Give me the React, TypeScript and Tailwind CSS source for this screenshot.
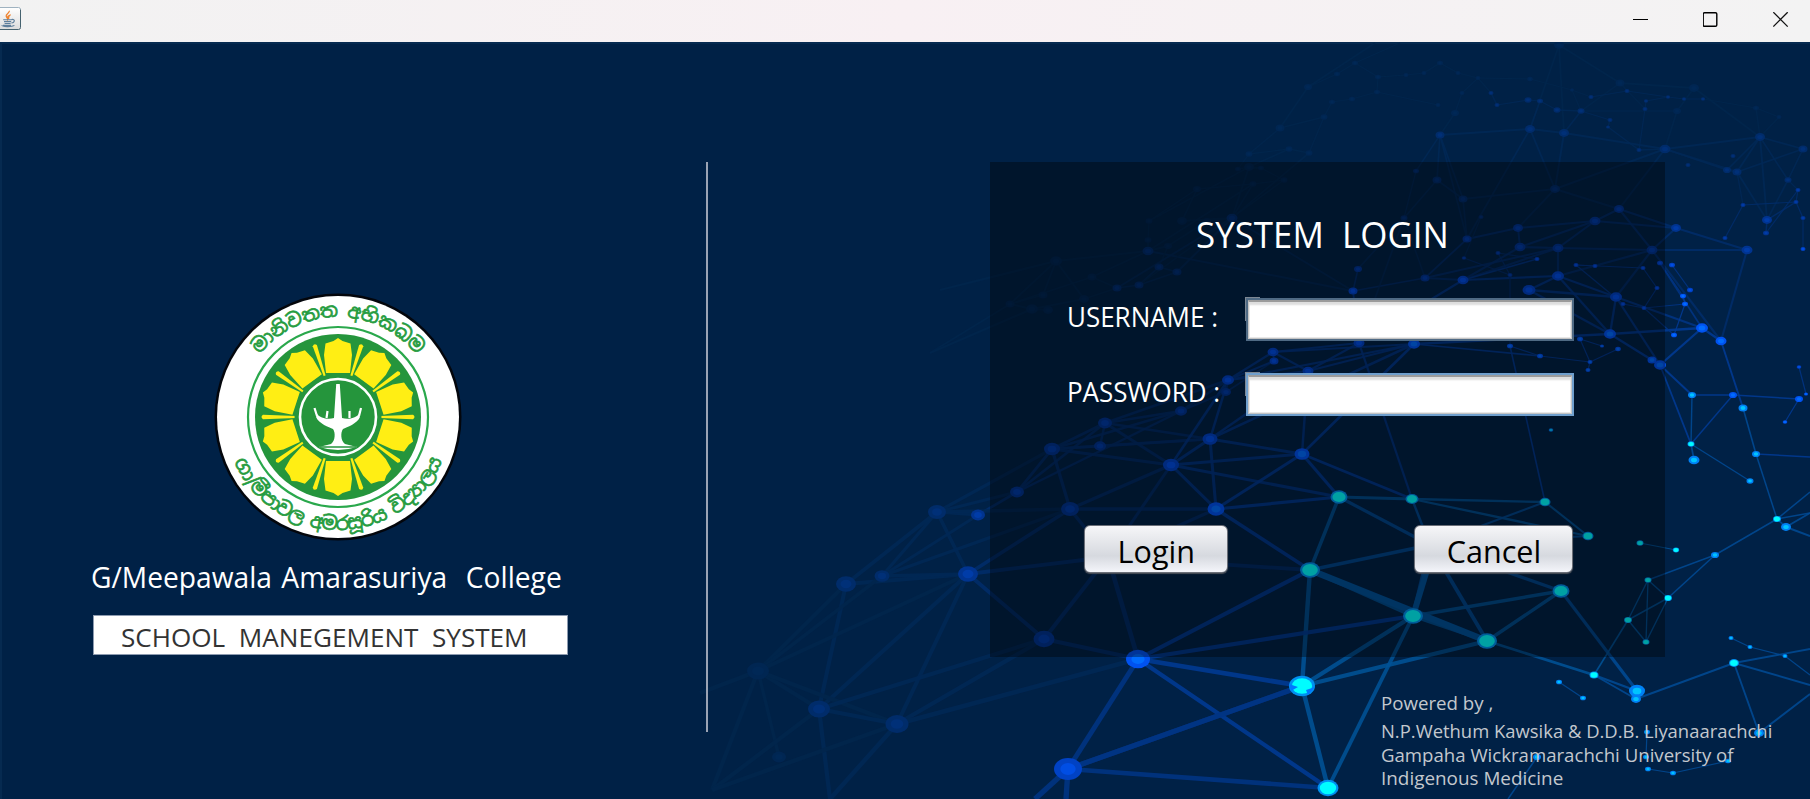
import React from "react";

type Node = [string, number, number, number, number];

/* id, x, y, radius, brightness (0 faint - 6 cyan) */
const nodes: Node[] = [
  ["a0", 1052, 449, 8, 2], ["a1", 1017, 492, 7, 2], ["a2", 937, 512, 9, 1], ["a3", 978, 515, 7, 2],
  ["a4", 1070, 509, 9, 2], ["a5", 846, 584, 10, 1], ["a6", 882, 576, 7.5, 1], ["a7", 968, 574, 10, 2],
  ["a8", 758, 671, 11, 0], ["a9", 819, 709, 11, 1], ["a10", 897, 724, 11.5, 1], ["a11", 779, 757, 7, 0],
  ["a12", 1044, 639, 10.5, 2],
  ["c0", 1210, 439, 7.5, 3], ["c1", 1171, 465, 8, 3], ["c2", 1302, 454, 7.5, 4], ["c3", 1339, 497, 8.5, 6],
  ["c4", 1216, 509, 8.5, 4], ["c5", 1310, 570, 10, 6], ["c6", 1138, 659, 12, 4], ["c7", 1302, 686, 13, 6],
  ["c8", 1068, 769, 14, 3], ["c9", 1328, 788, 10.5, 6], ["c10", 1105, 423, 7, 2], ["c11", 1100, 446, 6, 2],
  ["e0", 1412, 499, 6.5, 6], ["e1", 1545, 502, 5.5, 6], ["e2", 1588, 536, 5.5, 6], ["e3", 1561, 591, 8.5, 6],
  ["e4", 1413, 616, 10, 6], ["e5", 1487, 641, 10, 6], ["e6", 1691, 444, 3.5, 6], ["e7", 1694, 460, 5.5, 5],
  ["e8", 1750, 481, 3.5, 5], ["e9", 1756, 454, 4, 5], ["e10", 1777, 519, 4, 6], ["e11", 1786, 527, 5, 5],
  ["e12", 1715, 555, 4, 5], ["e13", 1640, 543, 3.5, 6], ["e14", 1676, 550, 3.2, 6], ["e15", 1648, 580, 3.5, 6],
  ["e16", 1668, 598, 4, 6], ["e17", 1628, 620, 4, 6], ["e18", 1646, 642, 3.5, 6], ["e19", 1594, 675, 4.5, 6],
  ["e20", 1637, 691, 8, 5], ["e21", 1636, 699, 5, 5], ["e22", 1559, 682, 3, 5], ["e23", 1583, 698, 3, 5],
  ["e24", 1731, 638, 2.5, 5], ["e25", 1750, 647, 2.5, 5], ["e26", 1785, 656, 2.5, 5], ["e27", 1734, 663, 5, 6],
  ["e28", 1759, 733, 5, 5], ["e29", 1647, 732, 3, 5], ["e30", 1646, 757, 3, 5], ["e31", 1648, 769, 3, 5],
  ["e32", 1673, 773, 3, 5], ["e33", 1728, 761, 3, 5], ["e34", 1537, 757, 4, 5],
  ["g0", 1437, 180, 4.5, 1], ["g1", 1463, 199, 4.5, 1], ["g2", 1555, 189, 5, 1], ["g3", 1619, 209, 5, 2],
  ["g4", 1595, 221, 5.5, 2], ["g5", 1518, 228, 5, 2], ["g6", 1520, 247, 5.5, 2], ["g7", 1558, 248, 5.5, 2],
  ["g8", 1467, 239, 4.5, 2], ["g9", 1425, 278, 4.5, 2], ["g10", 1463, 280, 5.5, 3], ["g11", 1558, 276, 6, 3],
  ["g12", 1529, 290, 6.5, 3], ["g13", 1616, 297, 6, 3], ["g14", 1610, 334, 6, 4], ["g15", 1652, 360, 4.5, 4],
  ["g16", 1660, 365, 6, 4], ["g17", 1652, 250, 5.5, 2], ["g18", 1676, 228, 5, 2], ["g19", 1747, 250, 5.5, 2],
  ["g20", 1702, 328, 6, 4], ["g21", 1721, 341, 5.5, 4], ["g22", 1692, 395, 4, 5], ["g23", 1733, 395, 4, 4],
  ["g24", 1743, 408, 4.5, 5], ["g26", 1799, 399, 4, 4], ["g27", 1806, 394, 2, 4], ["g28", 1799, 367, 2.3, 3],
  ["g29", 1785, 422, 2.3, 4], ["g30", 1660, 263, 3, 3], ["g31", 1672, 265, 3, 3], ["g32", 1690, 290, 3, 3],
  ["g33", 1683, 296, 3, 4], ["g34", 1685, 304, 3, 4], ["g35", 1674, 335, 3, 4], ["g36", 1657, 288, 2.5, 3],
  ["g37", 1644, 308, 2.5, 3], ["g38", 1643, 268, 2.5, 3], ["g39", 1623, 304, 2.5, 3], ["g40", 1595, 266, 2.5, 3],
  ["g41", 1576, 265, 2.5, 3], ["g42", 1537, 259, 2.5, 3], ["g43", 1510, 275, 2.5, 2], ["g44", 1498, 253, 2.5, 2],
  ["g45", 1464, 258, 2.3, 2], ["g46", 1481, 217, 2.5, 1], ["g47", 1414, 344, 6, 4], ["g48", 1510, 346, 3, 4],
  ["g49", 1540, 356, 3, 4], ["g50", 1590, 362, 2.5, 4], ["g51", 1588, 370, 2.5, 4], ["g52", 1580, 339, 3, 4],
  ["g53", 1602, 346, 2, 4], ["g54", 1618, 349, 2.8, 4], ["g55", 1551, 430, 2.3, 5], ["g56", 1404, 218, 3.5, 1],
  ["g57", 1416, 171, 3, 1],
  ["h0", 1737, 172, 4.5, 1], ["h1", 1727, 170, 4, 1], ["h2", 1767, 220, 5, 2], ["h3", 1766, 233, 3, 2],
  ["h4", 1743, 205, 2.5, 2], ["h5", 1725, 238, 2.5, 2], ["h6", 1788, 180, 3.5, 1], ["h7", 1798, 190, 2.5, 2],
  ["h8", 1796, 202, 2.5, 2], ["h9", 1803, 218, 2.5, 2], ["h10", 1803, 249, 2.5, 3],
  ["t0", 1440, 135, 4.5, 1], ["t1", 1530, 129, 5, 1], ["t2", 1564, 133, 5, 1], ["t3", 1665, 149, 5.5, 1],
  ["t4", 1760, 137, 5, 1], ["t5", 1803, 149, 4.5, 1], ["t6", 1620, 83, 4.5, 0], ["t7", 1694, 88, 5, 0],
  ["t8", 1677, 111, 4, 0], ["t9", 1559, 45, 5, 0], ["t10", 1308, 87, 4, 0], ["t11", 1280, 128, 4.5, 0],
  ["t12", 1324, 117, 3.5, 0], ["t13", 1249, 154, 3.5, 0], ["t14", 1289, 149, 3.5, 0], ["t15", 1309, 153, 3.5, 0],
  ["t16", 1249, 167, 5, 0], ["t17", 1238, 169, 3, 0], ["t18", 1261, 168, 3, 0], ["t19", 1253, 184, 3.5, 0],
  ["t20", 1284, 180, 3.5, 0], ["t21", 1232, 218, 5.5, 1], ["t22", 1377, 92, 3, 0], ["t23", 1332, 102, 3, 0],
  ["t24", 1352, 99, 3, 0], ["t25", 1438, 105, 2.5, 0], ["t26", 1455, 113, 4, 0], ["t27", 1462, 93, 2.5, 0],
  ["t28", 1491, 93, 2.5, 1], ["t29", 1497, 105, 2.5, 1], ["t30", 1528, 100, 3.5, 1], ["t31", 1540, 101, 3, 1],
  ["t32", 1557, 110, 3.5, 1], ["t33", 1581, 111, 3.5, 1], ["t34", 1610, 120, 2.5, 1], ["t35", 1608, 127, 2, 1],
  ["t36", 1639, 150, 2.5, 1], ["t37", 1645, 109, 2.5, 1], ["t38", 1646, 101, 2.2, 1], ["t39", 1668, 97, 2.2, 1],
  ["t40", 1684, 99, 2.2, 1], ["t41", 1703, 99, 2.2, 1], ["t42", 1627, 91, 2.5, 1], ["t43", 1591, 97, 2.5, 1],
  ["t44", 1572, 90, 2.2, 0], ["t45", 1530, 79, 2.8, 0], ["t46", 1478, 78, 2.5, 0], ["t47", 1440, 63, 3, 0],
  ["t48", 1458, 73, 2.5, 0], ["t49", 1424, 73, 2.5, 0], ["t50", 1406, 75, 2.5, 0], ["t51", 1378, 77, 3, 0],
  ["t52", 1355, 63, 3, 0], ["t53", 1337, 74, 3, 0], ["t54", 1756, 108, 3, 0], ["t55", 1779, 117, 2.5, 0],
  ["t56", 1733, 156, 2.5, 1], ["t57", 1688, 165, 2.5, 1],
  ["l0", 1056, 261, 6, 0], ["l1", 1092, 277, 4.5, 0], ["l2", 1117, 288, 4.5, 1], ["l3", 1139, 285, 4.5, 1],
  ["l4", 1084, 299, 5, 0], ["l5", 1043, 295, 4.5, 0], ["l6", 1048, 310, 5, 0], ["l7", 1032, 309, 6, 0],
  ["l8", 1010, 304, 4.5, 0], ["l9", 1148, 251, 5.5, 1], ["l10", 1148, 240, 3.5, 0], ["l11", 1149, 221, 3.5, 0],
  ["l12", 1182, 221, 5, 0], ["l13", 1168, 246, 4, 0], ["l14", 1159, 267, 4.5, 1], ["l15", 1177, 272, 4.5, 1],
  ["l17", 1207, 221, 4, 0], ["l18", 1197, 189, 4, 0], ["l20", 1358, 269, 4, 2], ["l21", 1353, 291, 4.5, 3],
  ["l22", 1359, 343, 5.5, 3], ["l23", 1273, 352, 5.5, 3], ["l24", 1274, 361, 4.5, 3], ["l25", 1308, 371, 5.5, 3],
  ["l26", 1228, 380, 6, 3], ["l27", 1226, 392, 5, 2], ["l28", 1181, 411, 6, 2],
  /* vertices that sit outside the visible area or behind a control */
  ["o0", 700, 693, 0, 0], ["o1", 712, 790, 0, 0], ["o2", 830, 799, 0, 1], ["o3", 1810, 492, 0, 5],
  ["o4", 1810, 513, 0, 5], ["o5", 1810, 536, 0, 5], ["o6", 1810, 649, 0, 5], ["o7", 1810, 675, 0, 5],
  ["o8", 1810, 685, 0, 5], ["o9", 1810, 694, 0, 5], ["o10", 1508, 799, 0, 5], ["o11", 1035, 799, 0, 3],
  ["o12", 1066, 799, 0, 3], ["o13", 1810, 457, 0, 4], ["o14", 1810, 400, 0, 4], ["o15", 1430, 545, 0, 5],
  ["o16", 1108, 557, 0, 2], ["o17", 1375, 43, 0, 0], ["o18", 1400, 43, 0, 0], ["o19", 930, 353, 0, 0],
  ["o20", 940, 290, 0, 0],
];

const links =
  "a0-a2 a0-a1 a0-a4 a0-c10 a0-c11 a0-c0 a0-c1 a0-l28 a1-a2 a1-a3 a1-c10 a1-l28 a2-a3 a2-a5 a2-a6 a2-a7 a2-a4 a3-a6 " +
  "a4-c1 a4-c4 a4-a7 a4-a6 a4-o16 a5-a8 a5-a7 a5-a9 a6-a8 a6-a7 a7-a12 a7-a8 a7-a9 a7-a10 a7-o16 a8-a9 a8-a11 a8-a10 a8-o0 a8-o1 " +
  "a9-a10 a9-a12 a9-o1 a9-o2 a10-a12 a10-c6 a10-o1 a10-o2 a12-c6 a12-o16 o16-c6 o16-c1 o16-c4 " +
  "c0-c1 c0-c2 c0-c4 c0-c10 c0-c11 c0-l26 c0-g47 c0-l25 c1-c2 c1-c3 c1-c4 c1-c10 c2-c3 c2-c4 c2-e0 c2-l25 c2-g47 c3-c4 c3-c5 c3-e0 c3-o15 " +
  "c4-c5 c5-o16 c5-o15 c5-e4 c5-c6 c5-c7 c6-c7 c6-c8 c6-c9 c6-e4 c7-c8 c7-c9 c7-e4 c7-e5 c8-c9 c8-c7 c8-o11 c8-o12 c9-e4 c10-l28 c10-l26 c10-c11 " +
  "e0-e1 e0-o15 e0-l22 e0-e2 e1-e2 e1-g48 e1-o15 e2-o15 e3-e4 e3-e5 e3-o15 e3-e20 e4-o15 e4-e5 e5-o15 e5-e19 e6-e7 e6-e8 " +
  "e6-g22 e6-g23 e6-g16 e9-g24 e9-e10 e9-o13 e10-e11 e10-e12 e10-o3 e10-o4 e11-o4 e11-o5 e12-e15 e12-e16 e13-e14 e15-e16 e15-e17 e15-e18 " +
  "e16-e17 e16-e18 e17-e18 e17-e19 e19-e20 e19-e21 e21-e27 e22-e23 e24-e25 e25-e26 e26-o7 e27-o6 e27-o8 e27-e28 e28-o9 e29-e30 e31-e32 e32-e33 e34-o10 " +
  "g0-g1 g0-t0 g0-g56 g1-g2 g1-g8 g1-t0 g2-t1 g2-t2 g2-g3 g2-g5 g3-t3 g3-g4 g3-g18 g4-g5 g4-g18 g4-g7 g4-g6 g3-g17 g5-g6 g5-g8 g6-g7 g6-g10 g7-g11 " +
  "g7-g17 g7-g10 g7-g9 g8-g9 g8-t0 g9-g56 g9-l21 g9-g10 g10-l22 g10-g42 g11-g12 g11-g13 g11-g10 g11-g14 g11-g17 g12-g13 g12-g14 g13-g14 g13-g17 g13-g20 g13-g16 " +
  "g14-g16 g14-g20 g14-g47 g15-g16 g16-g20 g16-g22 g17-g18 g17-g19 g17-g21 g18-g19 g19-g21 g20-g21 g20-g30 g21-g24 g22-g23 g23-g26 g26-g29 g27-g28 " +
  "g30-g33 g31-g32 g33-g34 g34-g35 g35-g37 g37-g34 g36-g38 g36-g37 g37-g39 g38-g41 g40-g41 g41-g39 g42-g44 g43-g44 g43-g48 g45-g43 g45-g46 " +
  "g47-l25 g47-l23 g47-l26 g47-g49 g48-g49 g49-g50 g50-g54 g50-g52 g50-g51 g52-g53 g56-l20 g57-t0 g56-g57 l20-l21 l21-l22 l20-g56 " +
  "l21-t21 l22-l23 l22-l25 l23-l24 l23-l25 l23-l26 l24-l27 l25-l26 l26-l27 l26-l28 l26-c1 l27-l28 l24-l26 l21-l9 l22-g56 " +
  "h0-h1 h0-h2 h0-t3 h0-t4 h0-h4 h0-t5 h2-t4 h2-h6 h2-h3 h2-h8 h3-h7 h4-h5 h6-h7 h7-h8 h8-h9 h9-h10 h6-t5 h4-h8 t4-t5 t4-h6 t4-h1 " +
  "t0-t1 t0-t26 t1-t2 t1-t9 t1-g8 t2-t3 t2-t9 t2-t33 t3-t8 t3-t36 t3-g2 t3-h1 t4-t54 t4-t7 t4-t3 t4-t55 t54-t55 t54-t41 t6-t7 t6-t9 t6-t33 " +
  "t6-t37 t7-t8 t8-t33 t33-t34 t34-t35 t35-t36 t36-t37 t37-t38 t38-t39 t39-t40 t40-t41 t39-t42 t42-t43 t43-t44 t44-t33 t32-t33 t30-t31 t31-t32 " +
  "t28-t29 t29-t30 t28-t46 t27-t46 t26-t27 t25-t22 t22-t24 t24-t23 t23-t12 t12-t11 t12-t15 t11-t13 t11-t10 t14-t15 t13-t14 t14-t16 t16-t17 t16-t18 " +
  "t16-t21 t18-t20 t19-t20 t17-t18 t13-t17 t19-t21 t15-t21 t46-t48 t48-t47 t47-t49 t49-t50 t50-t51 t51-t22 t51-t52 t52-t53 t53-t10 t10-o17 t52-o18 " +
  "t45-t46 t45-t44 t31-t1 " +
  "l0-l9 l0-l4 l0-l5 l0-l8 l1-l2 l1-l9 l2-l3 l3-l14 l4-l7 l4-l2 l5-l8 l6-l7 l7-l8 l9-l10 l10-l11 l11-t16 l12-l18 l12-t21 l13-l14 l13-l17 l14-l15 " +
  "l15-l3 l15-t21 l17-t21 l9-l13 l1-l8 l18-t19 l11-l18 l8-o19 l0-o20 l7-o19 l2-t21 l3-t20 l9-t19";

const lineTone = ["#01264c", "#002855", "#002c6a", "#003484", "#003a94", "#004a94", "#005296"];
const nodeTone = ["#002652", "#002c6a", "#003490", "#0042c4", "#0052f0", "#0080f4", "#0090f0"];
const coreTone = ["#002856", "#003078", "#003ca8", "#004ee4", "#006cff", "#00c4ff", "#00fcff"];

const byId = new Map(nodes.map((n) => [n[0], n]));

function Network() {
  return (
    <svg className="absolute -top-[2px] -left-[2px] h-[757px] w-[1810px]" viewBox="0 42 1810 757">
      {links.split(" ").map((link, i) => {
        const [from, to] = link.split("-");
        const p = byId.get(from);
        const q = byId.get(to);
        if (!p || !q) return null;
        const tone = Math.min(p[4], q[4]);
        const size = ((p[3] || q[3]) + (q[3] || p[3])) / 2;
        return (
          <line
            key={i}
            x1={p[1]}
            y1={p[2]}
            x2={q[1]}
            y2={q[2]}
            stroke={lineTone[tone]}
            strokeWidth={Math.max(1.2, size * 0.38)}
            strokeOpacity={0.88}
          />
        );
      })}
      <line x1="1310" y1="570" x2="1487" y2="641" stroke="#005299" strokeWidth="6.5" />
      <line x1="1430" y1="560" x2="1413" y2="616" stroke="#005299" strokeWidth="6" />
      {nodes.map(([id, x, y, r, b]) =>
        r ? (
          <g key={id}>
            <ellipse cx={x} cy={y} rx={r} ry={r * 0.78} fill={nodeTone[b]} />
            <ellipse cx={x} cy={y} rx={r * (b === 6 ? 0.78 : 0.55)} ry={r * (b === 6 ? 0.6 : 0.42)} fill={coreTone[b]} />
          </g>
        ) : null,
      )}
      <path d="M1289 684L1298 687L1291 691ZM1306 690L1315 687L1308 695Z" fill="#0078ff" />
    </svg>
  );
}

function JavaIcon() {
  return (
    <svg className="h-[23px] w-[21px]" viewBox="0 0 21 23">
      <defs>
        <linearGradient id="tile" x1="0" y1="0" x2="0" y2="1">
          <stop offset="0" stopColor="#ffffff" />
          <stop offset="1" stopColor="#dcdcdc" />
        </linearGradient>
      </defs>
      <path d="M0 .5H18.5Q20.5 .5 20.5 2.5V20.5Q20.5 22.5 18.5 22.5H0Z" fill="url(#tile)" />
      <path d="M0 .5H18.5Q20.5 .5 20.5 2.5" fill="none" stroke="#9fb2c0" />
      <path d="M20.5 2.5V20.5Q20.5 22.5 18.5 22.5H0" fill="none" stroke="#45626f" />
      <path d="M9.3 3.8C10 6 5.6 7 6.2 9.2C6.4 10.3 7.3 11 7.6 12C8 10.5 7 9.6 8.6 8.4M10.6 7.6C8 8.6 8.8 10 8.6 12" fill="none" stroke="#ee8330" strokeWidth="1.3" />
      <path d="M3.2 12.7H11.6M4 14.6H11.2M4.6 16.5H10.6M11.6 12.6C15.5 11.6 15 15.6 11.4 16M1.8 18.3C2 20 12 20.2 14.4 18.4M3 18.4H11" fill="none" stroke="#5f7f9c" strokeWidth="1.15" />
    </svg>
  );
}

function TitleBar() {
  return (
    <header className="flex h-[42px] items-start justify-between bg-linear-to-r from-[#f2f2f2] via-[#f8f0f3] to-[#f3f3f3] pt-[7px]">
      <JavaIcon />
      <div className="flex gap-[54px] pt-[5px] pr-[21px]">
        <svg className="h-4 w-4" viewBox="0 0 16 16">
          <path d="M0 7.5H15" stroke="#000" fill="none" />
        </svg>
        <svg className="h-4 w-4" viewBox="0 0 16 16">
          <rect x=".2" y=".7" width="13.6" height="13.6" rx="1.3" stroke="#000" strokeWidth="1.4" fill="none" />
        </svg>
        <svg className="h-4 w-4" viewBox="0 0 16 16">
          <path d="M.3 .2L14.7 14.6M14.7 .2L.3 14.6" stroke="#111" strokeWidth="1.3" fill="none" />
        </svg>
      </div>
    </header>
  );
}

const steps = [0, 36, 72, 108, 144, 180, 216, 252, 288, 324];

function Crest() {
  return (
    <svg className="h-[248px] w-[248px]" viewBox="-124 -124 248 248">
      <defs>
        <path id="motto" d="M-100 0A100 100 0 0 1 100 0" />
        <path id="school" d="M-113 0A113 113 0 0 0 113 0" />
      </defs>
      <circle r="123.5" fill="#03060c" />
      <circle r="121" fill="#fff" />
      <circle r="90" fill="none" stroke="#2aa84c" strokeWidth="2.2" />
      <circle r="83" fill="#25953c" />
      {steps.map((a) => (
        <g key={a} transform={`rotate(${a})`} fill="#ffee14">
          <path d="M0 -79L4.5 -76L12.5 -73.5L14 -62L12 -44H-12L-14 -62L-12.5 -73.5L-4.5 -76Z" />
          <path d="M-2.2 -75Q0 -78 2.2 -75L1 -42H-1Z" transform="rotate(18)" />
        </g>
      ))}
      <circle r="43.5" fill="#25953c" />
      <circle r="38" fill="none" stroke="#fff" strokeWidth="2.6" />
      <path
        d="M-1.8 -33H1.8L4 1C10 3 18 1 21 -3L22 0C19 7 9 10 5 12C2.5 15 2.5 24 7 27L19 30Q0 36 -19 30L-7 27C-2.5 24 -2.5 15 -5 12C-9 10 -19 7 -22 0L-21 -3C-18 1 -10 3 -4 1Z"
        fill="#fff"
      />
      <path d="M-21 -1L-23.5 -9M21 -1L23 -9M-11.5 1L-10.5 -6M11.5 1L11.5 -6" stroke="#fff" strokeWidth="2.2" fill="none" />
      <path d="M-18 30H18" stroke="#25953c" strokeWidth="1.4" />
      <g fill="#259c40" stroke="#259c40" strokeWidth=".7" fontSize="19" fontFamily="Noto Sans Sinhala, Noto Sans, sans-serif" textAnchor="middle">
        <text>
          <textPath href="#motto" startOffset="50%" textLength="180">මානිවතත අභිකඛම</textPath>
        </text>
        <text>
          <textPath href="#school" startOffset="50%" textLength="264">ගා/මීපාවල අමරසූරිය විද්‍යාලය</textPath>
        </text>
      </g>
    </svg>
  );
}

function Branding() {
  return (
    <section className="flex w-[706px] flex-col pt-[251px]">
      <div className="pl-[214px]">
        <Crest />
      </div>
      <h1 className="mt-[14px] h-[44px] pl-[91px] text-[28.5px] leading-[44px] whitespace-pre text-white">
        <span className="inline-block origin-left scale-x-[0.989] [word-spacing:2px]">{"G/Meepawala Amarasuriya  College"}</span>
      </h1>
      <div className="mt-[16px] ml-[93px] h-[40px] w-[475px] border border-[#8d9bb0] bg-white pl-[27px] text-[26px] leading-[42px] whitespace-pre text-[#333]">
        <span className="inline-block origin-left scale-x-[1.004]">{"SCHOOL  MANEGEMENT  SYSTEM"}</span>
      </div>
    </section>
  );
}

function Field({ label, type, focused }: { label: string; type: string; focused?: boolean }) {
  return (
    <label className="flex h-[45px] items-start">
      <span className="w-[179px] pt-[1px] text-[26.5px] leading-[37px] whitespace-nowrap text-white">
        <span className="inline-block origin-left scale-x-[0.98]">{label}</span>
      </span>
      <span
        className={`relative border-2 before:absolute before:-top-[3px] before:-left-[3px] before:h-6 before:w-[15px] before:border-t before:border-l before:border-[#7d8894] ${
          focused ? "border-[#6f9fcd]" : "border-[#4f6a84]"
        }`}
      >
        <input
          type={type}
          className="block h-[39px] w-[324px] border border-t-2 border-[#c4c4c4] border-t-[#9b9b9b] bg-white px-2 text-xl text-black shadow-[inset_0_4px_2px_-1px_#dedede,inset_0_0_0_1px_#e8e8e8] outline-none"
        />
      </span>
    </label>
  );
}

function Button({ children, className }: { children: string; className: string }) {
  return (
    <button
      className={`h-[48px] rounded-[6px] border border-[#6b6f78] bg-linear-to-b from-[#f6f6f8] via-[#d6d9df] via-65% to-[#f4f5fa] pt-[5px] text-[31px] leading-[41px] text-black shadow-[0_1px_1px_#4a4f58] ${className}`}
    >
      <span className="inline-block scale-x-[0.985]">{children}</span>
    </button>
  );
}

function LoginPanel() {
  return (
    <form className="h-[495px] w-[675px] bg-black/36 pl-[77px]" onSubmit={(e) => e.preventDefault()}>
      <h2 className="h-[136px] pt-[47px] pl-[129px] text-[36.5px] leading-[50px] whitespace-pre text-white">
        <span className="inline-block origin-left scale-x-[0.957]">{"SYSTEM  LOGIN"}</span>
      </h2>
      <Field label="USERNAME :" type="text" />
      <div className="h-[30px]" />
      <Field label="PASSWORD :" type="password" focused />
      <div className="flex pt-[107px] pl-[17px]">
        <Button className="w-[144px]">Login</Button>
        <Button className="ml-[186px] w-[159px]">Cancel</Button>
      </div>
    </form>
  );
}

function Credits() {
  return (
    <footer className="pt-[34px] pl-[391px] text-[18.5px] leading-[23.5px] whitespace-nowrap text-[#c3c8ce]">
      <p className="mb-[4px]">
        <span className="inline-block origin-left scale-x-[1.01]">Powered by ,</span>
      </p>
      <p className="mb-[1px]">
        <span className="inline-block origin-left scale-x-[0.996]">{"N.P.Wethum Kawsika & D.D.B. Liyanaarachchi"}</span>
      </p>
      <p className="-mb-[1px]">
        <span className="inline-block origin-left scale-x-[1.006]">Gampaha Wickramarachchi University of</span>
      </p>
      <p>
        <span className="inline-block origin-left scale-x-[1.02]">Indigenous Medicine</span>
      </p>
    </footer>
  );
}

export default function App() {
  return (
    <div className="flex h-[799px] w-[1810px] flex-col overflow-hidden font-['Open_Sans',sans-serif]">
      <TitleBar />
      <main className="relative h-[757px] border-t-2 border-l-2 border-[#062a50] bg-[#002146]">
        <Network />
        <div className="relative -mt-[2px] -ml-[2px] flex h-full">
          <Branding />
          <div className="mt-[120px] h-[570px] w-[2px] bg-[#9aa3b4]" />
          <div className="ml-[282px] pt-[120px]">
            <LoginPanel />
            <Credits />
          </div>
        </div>
      </main>
    </div>
  );
}
